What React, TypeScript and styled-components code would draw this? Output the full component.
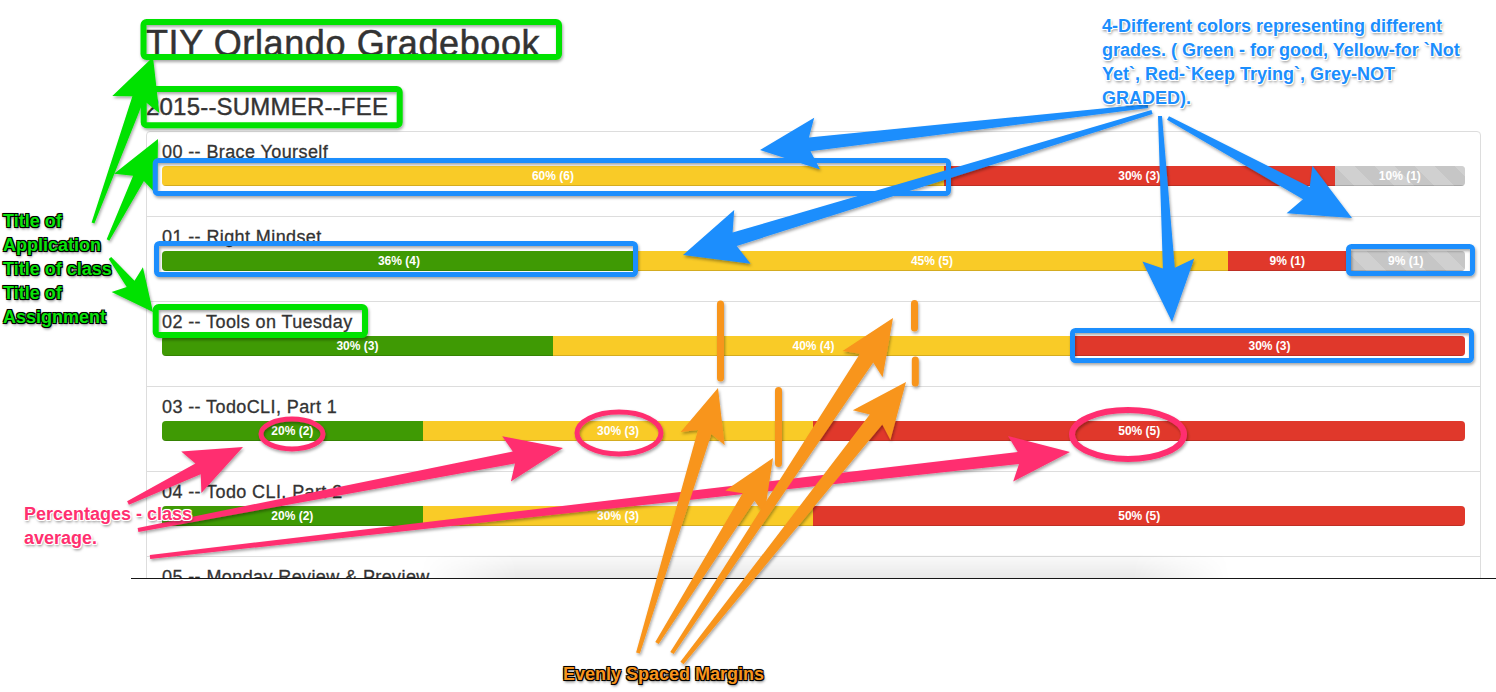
import React from 'react';
import styled, { createGlobalStyle } from 'styled-components';

const Global = createGlobalStyle`
  html, body { margin: 0; padding: 0; background: #fff; }
  body { font-family: "Liberation Sans", Arial, Helvetica, sans-serif; }
  * { box-sizing: border-box; }
`;

const Stage = styled.div`
  position: relative;
  width: 1496px;
  height: 692px;
  overflow: hidden;
  background: #fff;
`;

const Shot = styled.div`
  position: relative;
  margin-left: 131px;
  width: 1365px;
  height: 579px;
  overflow: hidden;
  border-bottom: 1px solid #161616;
  padding: 24px 0 0 15px;
`;

const Container = styled.div`
  width: 1335px;
`;

const AppTitle = styled.h1`
  margin: 0;
  font-size: 36px;
  line-height: 40px;
  font-weight: 500;
  letter-spacing: 0.6px;
  color: #333;
  -webkit-text-stroke: 0.5px #333;
`;

const ClassTitle = styled.h3`
  margin: 30px 0 11px;
  font-size: 24px;
  line-height: 26px;
  font-weight: 500;
  letter-spacing: 0.2px;
  color: #333;
  -webkit-text-stroke: 0.4px #333;
`;

const List = styled.ul`
  list-style: none;
  margin: 0;
  padding: 0;
  border: 1px solid #ddd;
  border-radius: 4px;
  background: #fff;
`;

const Item = styled.li`
  padding: 10px 15px;
  & + & {
    border-top: 1px solid #ddd;
  }
`;

const AssignmentTitle = styled.h4`
  margin: 0 0 4px;
  font-size: 18px;
  line-height: 20px;
  font-weight: 500;
  letter-spacing: 0.4px;
  color: #333;
  -webkit-text-stroke: 0.3px #333;
`;

const Progress = styled.div`
  display: flex;
  height: 20px;
  margin-bottom: 20px;
  overflow: hidden;
  border-radius: 4px;
  background: #f5f5f5;
  box-shadow: inset 0 1px 2px rgba(0, 0, 0, 0.1);
`;

type Grade = 'green' | 'yellow' | 'red' | 'grey';

const gradeColors: Record<Grade, string> = {
  green: '#3f9a04',
  yellow: '#f9cb27',
  red: '#e0382b',
  grey: '#c6c6c6',
};

const Segment = styled.div<{ $grade: Grade }>`
  height: 20px;
  font-size: 12px;
  line-height: 20px;
  font-weight: 700;
  color: #fff;
  text-align: center;
  white-space: nowrap;
  background-color: ${(p) => gradeColors[p.$grade]};
  box-shadow: inset 0 -1px 0 rgba(0, 0, 0, 0.15);
  ${(p) =>
    p.$grade === 'grey'
      ? `background-image: linear-gradient(45deg, rgba(255,255,255,.18) 25%, transparent 25%, transparent 50%, rgba(255,255,255,.18) 50%, rgba(255,255,255,.18) 75%, transparent 75%, transparent);
         background-size: 40px 40px;`
      : ''}
`;

const FadeBand = styled.div`
  position: absolute;
  left: 289px;
  top: 555px;
  width: 810px;
  height: 24px;
  background: linear-gradient(to bottom, rgba(0, 0, 0, 0.02), rgba(0, 0, 0, 0.09));
  -webkit-mask-image: linear-gradient(to right, transparent, #000 12%, #000 88%, transparent);
  mask-image: linear-gradient(to right, transparent, #000 12%, #000 88%, transparent);
  pointer-events: none;
`;

const Overlay = styled.svg`
  position: absolute;
  left: 0;
  top: 0;
  pointer-events: none;
`;

const Note = styled.div<{ $x: number; $y: number; $color: string; $edge: string; $shadow: string }>`
  position: absolute;
  left: ${(p) => p.$x}px;
  top: ${(p) => p.$y}px;
  font-family: "Liberation Sans", Arial, Helvetica, sans-serif;
  font-weight: 700;
  font-size: 18px;
  line-height: 24px;
  white-space: nowrap;
  color: ${(p) => p.$color};
  text-shadow: -1px -1px 0 ${(p) => p.$edge}, 1px -1px 0 ${(p) => p.$edge},
    -1px 1px 0 ${(p) => p.$edge}, 1px 1px 0 ${(p) => p.$edge},
    0 0 2px ${(p) => p.$edge}, 1px 2px 3px ${(p) => p.$shadow};
`;

type Row = { title: string; segs: [Grade, number][] };

const rows: Row[] = [
  { title: '00 -- Brace Yourself', segs: [['yellow', 6], ['red', 3], ['grey', 1]] },
  { title: '01 -- Right Mindset', segs: [['green', 4], ['yellow', 5], ['red', 1], ['grey', 1]] },
  { title: '02 -- Tools on Tuesday', segs: [['green', 3], ['yellow', 4], ['red', 3]] },
  { title: '03 -- TodoCLI, Part 1', segs: [['green', 2], ['yellow', 3], ['red', 5]] },
  { title: '04 -- Todo CLI, Part 2', segs: [['green', 2], ['yellow', 3], ['red', 5]] },
  { title: '05 -- Monday Review & Preview', segs: [['green', 2], ['yellow', 3], ['red', 5]] },
];

type Pt = [number, number];

const arrow = (t: Pt, p: Pt, tw: number, nw: number, hl: number, hw: number) => {
  const dx = p[0] - t[0];
  const dy = p[1] - t[1];
  const L = Math.hypot(dx, dy);
  const ux = dx / L;
  const uy = dy / L;
  const nx = -uy;
  const ny = ux;
  const nk: Pt = [p[0] - ux * hl, p[1] - uy * hl];
  const bb: Pt = [p[0] - ux * hl * 1.15, p[1] - uy * hl * 1.15];
  const pts: Pt[] = [
    [t[0] + (nx * tw) / 2, t[1] + (ny * tw) / 2],
    [nk[0] + (nx * nw) / 2, nk[1] + (ny * nw) / 2],
    [bb[0] + (nx * hw) / 2, bb[1] + (ny * hw) / 2],
    p,
    [bb[0] - (nx * hw) / 2, bb[1] - (ny * hw) / 2],
    [nk[0] - (nx * nw) / 2, nk[1] - (ny * nw) / 2],
    [t[0] - (nx * tw) / 2, t[1] - (ny * tw) / 2],
  ];
  return pts.map((q) => q.map((v) => v.toFixed(1)).join(',')).join(' ');
};

const GREEN = '#06e206';
const BLUE = '#1b8efd';
const PINK = '#ff2f6f';
const ORANGE = '#f8951d';

const Annotations = () => (
  <Overlay width={1496} height={692} viewBox="0 0 1496 692">
    <defs>
      <filter id="ds" x="-20%" y="-20%" width="140%" height="140%">
        <feDropShadow dx="1" dy="2" stdDeviation="1.4" floodColor="#000" floodOpacity="0.35" />
      </filter>
    </defs>
    <g filter="url(#ds)">
      {/* green boxes */}
      <rect x={143.5} y={22} width={415.5} height={35} rx={3} fill="none" stroke={GREEN} strokeWidth={6} />
      <rect x={143.7} y={89} width={256} height={36.3} rx={3} fill="none" stroke={GREEN} strokeWidth={6} />
      <rect x={155.7} y={307} width={209.3} height={28} rx={3} fill="none" stroke={GREEN} strokeWidth={6} />
      {/* green arrows */}
      <polygon points={arrow([93, 223], [153, 57], 3, 12, 44, 50)} fill={GREEN} />
      <polygon points={arrow([108, 240], [158, 139], 3, 12, 44, 48)} fill={GREEN} />
      <polygon points={arrow([110, 258], [153, 312], 3, 10, 36, 40)} fill={GREEN} />

      {/* blue boxes */}
      <rect x={155.2} y={160.5} width={793.3} height={33} rx={3} fill="none" stroke={BLUE} strokeWidth={5} />
      <rect x={156.5} y={243.5} width={479} height={31} rx={3} fill="none" stroke={BLUE} strokeWidth={5} />
      <rect x={1348.5} y={246.5} width={124} height={27} rx={3} fill="none" stroke={BLUE} strokeWidth={5} />
      <rect x={1072.5} y={330.5} width={399} height={30} rx={3} fill="none" stroke={BLUE} strokeWidth={5} />
      {/* blue arrows */}
      <polygon points={arrow([1148, 106], [760, 150], 4, 14, 50, 52)} fill={BLUE} />
      <polygon points={arrow([1152, 112], [683, 255], 4, 14, 54, 56)} fill={BLUE} />
      <polygon points={arrow([1160, 116], [1172, 322], 4, 12, 54, 52)} fill={BLUE} />
      <polygon points={arrow([1168, 118], [1352, 218], 4, 14, 52, 54)} fill={BLUE} />

      {/* pink ellipses */}
      <ellipse cx={292} cy={434} rx={31} ry={15} fill="none" stroke={PINK} strokeWidth={5} />
      <ellipse cx={619} cy={433} rx={42} ry={21} fill="none" stroke={PINK} strokeWidth={5} />
      <ellipse cx={1128} cy={434.5} rx={56} ry={24.5} fill="none" stroke={PINK} strokeWidth={6} />
      {/* pink arrows */}
      <polygon points={arrow([128, 503], [243, 447], 4, 12, 50, 46)} fill={PINK} />
      <polygon points={arrow([138, 530], [563, 448], 4, 12, 50, 46)} fill={PINK} />
      <polygon points={arrow([150, 557], [1070, 452], 4, 12, 52, 46)} fill={PINK} />

      {/* orange marks */}
      <line x1={720.5} y1={304} x2={720.5} y2={378} stroke={ORANGE} strokeWidth={7} strokeLinecap="round" />
      <line x1={778.5} y1={390.5} x2={778.5} y2={463.5} stroke={ORANGE} strokeWidth={7} strokeLinecap="round" />
      <line x1={914.5} y1={303.5} x2={914.5} y2={328} stroke={ORANGE} strokeWidth={7} strokeLinecap="round" />
      <line x1={915.3} y1={360} x2={915.3} y2={383} stroke={ORANGE} strokeWidth={7} strokeLinecap="round" />
      {/* orange arrows */}
      <polygon points={arrow([638, 653], [718, 388], 4, 14, 46, 46)} fill={ORANGE} />
      <polygon points={arrow([657, 643], [773, 458], 4, 14, 46, 46)} fill={ORANGE} />
      <polygon points={arrow([672, 653], [893, 318], 4, 16, 48, 48)} fill={ORANGE} />
      <polygon points={arrow([682, 663], [906, 382], 4, 16, 48, 48)} fill={ORANGE} />
    </g>
  </Overlay>
);

export default function App() {
  return (
    <>
      <Global />
      <Stage>
        <Shot>
          <Container>
            <AppTitle>TIY Orlando Gradebook</AppTitle>
            <ClassTitle>2015--SUMMER--FEE</ClassTitle>
            <List>
              {rows.map((row) => {
                const total = row.segs.reduce((s, [, n]) => s + n, 0);
                return (
                  <Item key={row.title}>
                    <AssignmentTitle>{row.title}</AssignmentTitle>
                    <Progress>
                      {row.segs.map(([g, n], i) => (
                        <Segment key={i} $grade={g} style={{ width: `${(n / total) * 100}%` }}>
                          {Math.round((n / total) * 100)}% ({n})
                        </Segment>
                      ))}
                    </Progress>
                  </Item>
                );
              })}
            </List>
          </Container>
          <FadeBand />
        </Shot>
        <Annotations />
        <Note $x={3} $y={209} $color="#0be30b" $edge="#000" $shadow="rgba(0,0,0,.6)">
          Title of
          <br />
          Application
          <br />
          Title of class
          <br />
          Title of
          <br />
          Assignment
        </Note>
        <Note $x={1102} $y={14} $color={BLUE} $edge="#fff" $shadow="rgba(0,0,0,.55)">
          4-Different colors representing different
          <br />
          grades. ( Green - for good, Yellow-for `Not
          <br />
          Yet`, Red-`Keep Trying`, Grey-NOT
          <br />
          GRADED).
        </Note>
        <Note $x={24} $y={502} $color={PINK} $edge="#fff" $shadow="rgba(0,0,0,.55)">
          Percentages - class
          <br />
          average.
        </Note>
        <Note $x={563} $y={662} $color={ORANGE} $edge="#000" $shadow="rgba(0,0,0,.6)">
          Evenly Spaced Margins
        </Note>
      </Stage>
    </>
  );
}
